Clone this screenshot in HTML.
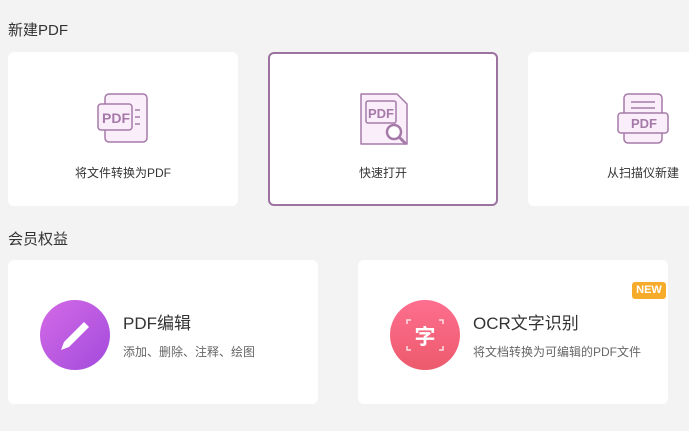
<!DOCTYPE html>
<html><head><meta charset="utf-8"><style>
*{margin:0;padding:0;box-sizing:border-box}
body{width:689px;height:431px;background:#f3f3f3;font-family:"Liberation Sans","Noto Sans CJK SC",sans-serif;position:relative;overflow:hidden;color:#333}
.t{position:absolute;font-size:15px;color:#333}
.c{position:absolute;background:#fff;border-radius:6px}
.lab{position:absolute;left:0;right:0;top:112px;text-align:center;font-size:12px;color:#333}
.ic{position:absolute}
.h{position:absolute;font-size:16px;color:#333}
.s{position:absolute;font-size:12px;color:#666}
</style></head><body>
<div class="t" style="left:8px;top:19px">新建PDF</div>
<div class="c" style="left:8px;top:52px;width:230px;height:154px">
<svg class="ic" style="left:89px;top:41px" width="54" height="52" viewBox="0 0 54 52">
<rect x="8" y="1" width="42" height="48" rx="4" fill="#fbeefb" stroke="#a57aa8" stroke-width="1.5"/>
<rect x="1" y="11" width="34" height="26" rx="3" fill="#fbeefb" stroke="#a57aa8" stroke-width="1.5"/>
<text x="5" y="30" font-family="Liberation Sans" font-weight="bold" font-size="14" fill="#a57aa8">PDF</text>
<path d="M38 17h5M38 24h5M38 31h5" stroke="#a57aa8" stroke-width="1.5"/>
</svg>
<div class="lab">将文件转换为PDF</div></div>
<div class="c" style="left:268px;top:52px;width:230px;height:154px;border:2px solid #9c72a0">
<svg class="ic" style="left:88px;top:39px" width="52" height="54" viewBox="0 0 52 54">
<path d="M3 1h36l10 10v40H3z" fill="#fbeefb" stroke="#a57aa8" stroke-width="1.5" stroke-linejoin="round"/>
<rect x="8" y="8" width="30" height="22" rx="2" fill="#fbeefb" stroke="#a57aa8" stroke-width="1.5"/>
<text x="10" y="25" font-family="Liberation Sans" font-weight="bold" font-size="13" fill="#a57aa8">PDF</text>
<circle cx="36" cy="39" r="7" fill="#fff" stroke="#a57aa8" stroke-width="2.5"/>
<path d="M41 44l7 7" stroke="#a57aa8" stroke-width="3"/>
</svg>
<div class="lab" style="top:110px">快速打开</div></div>
<div class="c" style="left:528px;top:52px;width:230px;height:154px">
<svg class="ic" style="left:89px;top:41px" width="52" height="52" viewBox="0 0 52 52">
<rect x="7" y="1" width="38" height="49" rx="4" fill="#fbeefb" stroke="#a57aa8" stroke-width="1.5"/>
<path d="M14 9h24M14 15h24" stroke="#a57aa8" stroke-width="1.5"/>
<rect x="1" y="20" width="50" height="20" rx="3" fill="#fbeefb" stroke="#a57aa8" stroke-width="1.5"/>
<text x="14" y="35" font-family="Liberation Sans" font-weight="bold" font-size="13" fill="#a57aa8">PDF</text>
</svg>
<div class="lab">从扫描仪新建</div></div>
<div class="t" style="left:8px;top:228px">会员权益</div>
<div class="c" style="left:8px;top:260px;width:310px;height:144px">
<div style="position:absolute;left:32px;top:40px;width:70px;height:70px;border-radius:50%;background:linear-gradient(135deg,#d46ae6,#a24bdc)">
<svg width="70" height="70" viewBox="0 0 70 70"><path d="M44 22l5 5-20 20-8 3 3-8z" fill="#fff"/></svg></div>
<div class="h" style="left:115px;top:49px;font-size:17px">PDF编辑</div>
<div class="s" style="left:115px;top:83px">添加、删除、注释、绘图</div></div>
<div class="c" style="left:358px;top:260px;width:310px;height:144px">
<div style="position:absolute;left:32px;top:40px;width:70px;height:70px;border-radius:50%;background:linear-gradient(180deg,#fe6f8f,#ec5a6c)">
<svg width="70" height="70" viewBox="0 0 70 70" style="position:absolute;left:0;top:0"><path d="M17 24v-4h4M49 20h4v4M17 46v4h4M49 50h4v-4" stroke="#fff" stroke-width="1.5" fill="none" opacity=".8"/></svg>
<div style="position:absolute;left:0;right:0;top:21px;text-align:center;color:#fff;font-size:21px;font-weight:bold">字</div></div>
<div class="h" style="left:115px;top:49px;font-size:17px">OCR文字识别</div>
<div class="s" style="left:115px;top:83px">将文档转换为可编辑的PDF文件</div>
<div style="position:absolute;left:274px;top:22px;width:34px;height:17px;background:#f7ab2b;border-radius:3px;color:#fff;font-size:11px;font-weight:bold;text-align:center;line-height:17px">NEW</div></div>
</body></html>
